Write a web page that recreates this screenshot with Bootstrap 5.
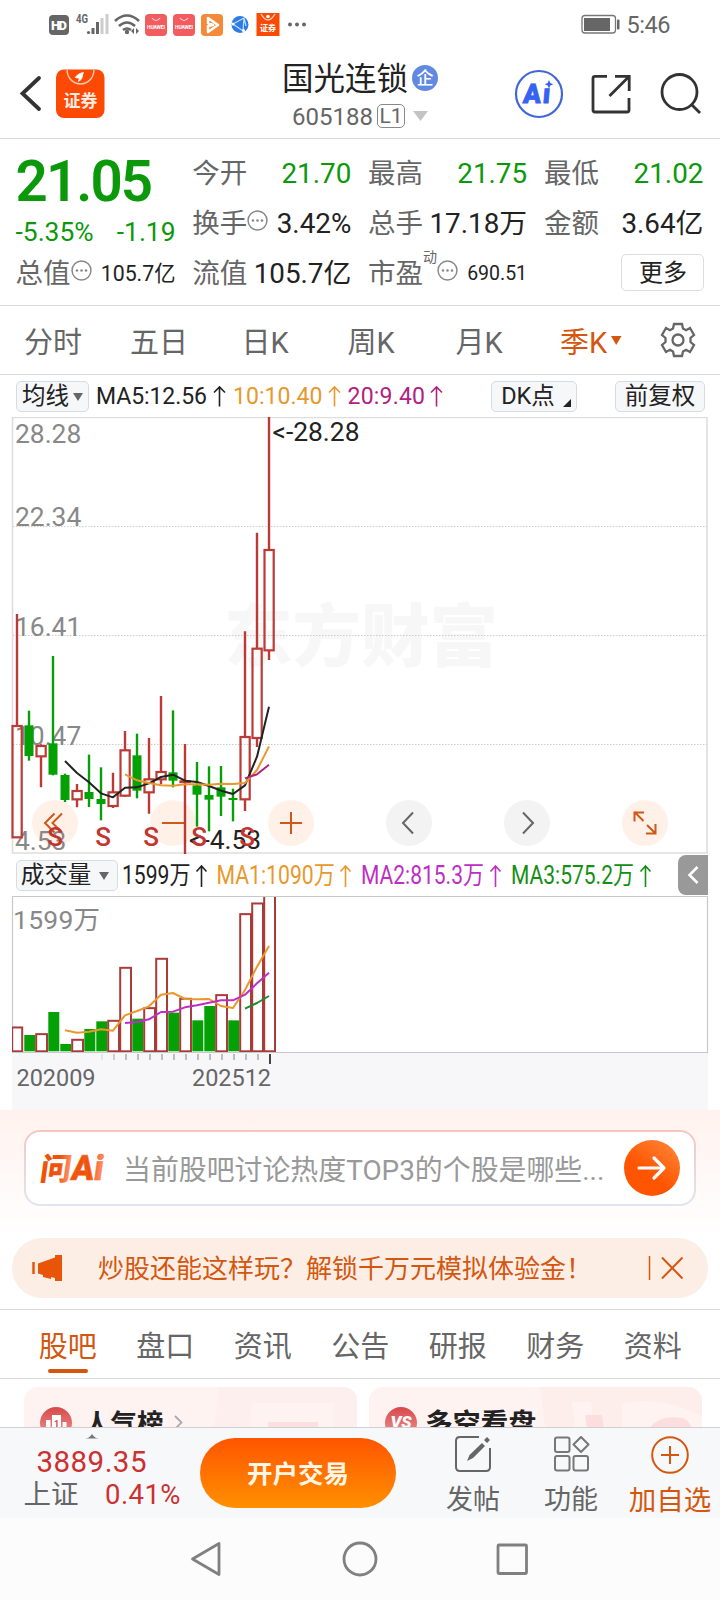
<!DOCTYPE html>
<html lang="zh-CN">
<head>
<meta charset="utf-8">
<meta name="viewport" content="width=device-width, initial-scale=1">
<title>国光连锁 605188</title>
<link href="https://cdn.jsdelivr.net/npm/bootstrap@5.3.0/dist/css/bootstrap.min.css" rel="stylesheet">
<style>
:root{--ink:#222;--dim:#666;--up:#c23531;--down:#0b990b;--accent:#d4570f;--rule:#d9d9d9}
body{font-family:Roboto,"Noto Sans CJK SC",sans-serif;color:var(--ink);background:#fff;line-height:1;width:720px;height:1600px;overflow:hidden}
svg{display:block;flex:none}
svg text{font-family:Roboto,"Noto Sans CJK SC",sans-serif}
.status-row{height:48px}
.title-row{height:91px;border-bottom:1px solid var(--rule)}
.side-zone{width:240px}
.stock-name{font-size:31.5px}
.stock-code{font-size:24px;color:var(--dim);padding-top:1px}
.level-tag{font-size:21px;border:1.5px solid #888;border-radius:5px;width:28px;height:24px;color:var(--dim)}
.ent-tag{width:26px;height:26px;background:#6189e0;font-size:17px;font-weight:500;color:#fff;margin-top:-3px}
.quote-panel{height:167px;border-bottom:1px solid var(--rule);display:grid;grid-template-columns:160px 159px 159px 159.5px;column-gap:16.8px;padding:10px 15.5px 0;grid-template-rows:50px 50px 50px}
.quote-panel>div{display:flex;justify-content:space-between;align-items:center;white-space:nowrap}
.lbl{font-size:27.5px;color:var(--dim);display:flex;align-items:center}
.val{font-size:27.8px}
.delta{font-size:26.4px}
.val-sm{font-size:21.3px}
.val-xs{font-size:19.5px}
.dyn{font-size:14px;top:-3px}
.tip-mark{margin-bottom:7px}
.big-price{font-size:56.5px;font-weight:600;letter-spacing:-1.9px}
.fall{color:var(--down)}
.more-btn{width:83px;height:37px;border:1.5px solid #ddd;border-radius:5px;font-size:24px;display:flex;align-items:center;justify-content:center;margin-top:-3px;margin-right:-1px}
.period-row{height:69px;border-bottom:1px solid var(--rule);font-size:29px;color:var(--dim)}
.period-row>span{width:106px;text-align:center;white-space:nowrap;padding-top:6px}
.hot{color:var(--accent)!important}
.ma-row{height:42px;font-size:22.9px;white-space:nowrap;padding:0 15px 0 16px}
.chip{height:31px;background:#f6f7f9;border:1px solid #d8dbe0;border-radius:5px;font-size:23.5px;display:flex;align-items:center;justify-content:center;padding-top:2px}
.vol-row{height:42px;padding-left:16px;padding-right:12px}
.fold-btn{width:30px;height:40px;background:#999;border-radius:8px 0 0 8px}
.ask-zone{height:128px;background:linear-gradient(#fff2ee,#fff);padding:20px 24px 0}
.ask-box{height:76px;border:2px solid transparent;border-radius:16px;background:linear-gradient(#fff,#fff) padding-box,linear-gradient(#f5c6bf,#dfe6f3) border-box;padding:0 14px 0 11px}
.ask-text{font-size:27.9px;color:#999;white-space:nowrap;padding-top:5px}
.ask-go{width:56px;height:56px;border-radius:50%;background:linear-gradient(35deg,#ff5400 40%,#ff8a3c)}
.promo{height:60px;margin:0 12px;border-radius:30px;background:#fdeee5;color:var(--accent);font-size:26px;white-space:nowrap}
.promo-text{padding-top:2px}
.info-tabs{height:70px;margin-top:11px;border-top:1px solid var(--rule);border-bottom:1px solid var(--rule);font-size:29px;color:var(--dim);padding:0 18.5px 0 19px}
.info-tabs>span{flex:1;text-align:center;position:relative;padding-top:23px}
.info-tabs .hot::after{content:"";position:absolute;left:28.5px;top:59px;width:40px;height:4px;border-radius:2px;background:var(--accent)}
.teasers{height:48px;padding:8px 18px 0 24px;gap:12px;overflow:hidden}
.teaser{width:333px;height:90px;border-radius:14px;overflow:hidden}
.dock{height:91px;background:#f7f8fa;border-top:1px solid #cfcfd4}
.open-btn{width:196px;height:70px;border-radius:35px;background:linear-gradient(#ff5500,#ff9000);color:#fff6e4;font-size:25.5px;font-weight:700;margin-top:10px;padding-top:3px}
.dock-item{font-size:27px;color:var(--dim);white-space:nowrap}
.dock-item div{padding-top:13px}
.post-item{margin-left:50px;width:54px}
.func-item{margin-left:44px;width:54px}
.add-item{margin-left:30px;width:84px;font-size:27.5px}
.sys-nav{height:82px;background:#fcfcfc}
</style>
</head>
<body>

<header class="status-row d-flex align-items-center justify-content-between">
  <svg width="320" height="48" viewBox="0 0 320 48">
    <rect x="49" y="15" width="20" height="20" rx="4" fill="#666"/>
    <text x="59" y="30" font-size="13" font-weight="900" fill="#fff" text-anchor="middle" textLength="16">HD</text>
    <text x="76" y="23" font-size="12" font-weight="700" fill="#666" textLength="12" lengthAdjust="spacingAndGlyphs">4G</text>
    <g fill="#666"><circle cx="88.5" cy="32.5" r="1.6"/><rect x="91.500" y="28" width="3" height="6"/><rect x="96" y="22" width="3" height="12"/></g>
    <g fill="#ccc"><rect x="100.500" y="18" width="3" height="16"/><rect x="105.500" y="14" width="3" height="20"/></g>
    <g fill="none" stroke="#666" stroke-width="2.600"><path d="M115 21Q127 10 139 21M119 26Q127 19 135 26M123 30Q127 27 131 30"/></g>
    <circle cx="127" cy="32" r="2.200" fill="#666"/><path d="M131 31l3-3v6zM139 31l-3-3v6z" fill="#666"/>
    <g id="hw"><rect x="145" y="14" width="22" height="22" rx="4" fill="#f25c5f"/><path d="M152 18q4 5 8 0" fill="none" stroke="#fdd" stroke-width="1.200"/><text x="156" y="28.500" fill="#fff" font-size="5" font-weight="700" text-anchor="middle" textLength="18">HUAWEI</text></g>
    <use href="#hw" x="28"/>
    <rect x="201" y="14" width="22" height="22" rx="4" fill="#f5893a"/><path d="M208 18l10 7-10 7v-6l5-1-5-2z" fill="none" stroke="#fff" stroke-width="2.500" stroke-linejoin="round"/>
    <circle cx="240" cy="24.500" r="8.500" fill="#2f7be6"/><path d="M233 24l11-6-1 13zM244 18l2 8" stroke="#bfe0ff" fill="none" stroke-width="1.200"/><circle cx="233" cy="24" r="1.500" fill="#fff"/><circle cx="243.500" cy="30.500" r="1.500" fill="#fff"/>
    <rect x="256.500" y="13" width="23" height="23" fill="#fa4b06"/><path d="M261 14q7 12 14 0" fill="none" stroke="#ffd8c4" stroke-width="1.200"/><circle cx="268" cy="16.500" r="1.800" fill="#fff"/><text x="268" y="31" font-size="8" font-weight="700" fill="#fff" text-anchor="middle">证券</text>
    <g fill="#666"><circle cx="290" cy="24.500" r="2"/><circle cx="297" cy="24.500" r="2"/><circle cx="304" cy="24.500" r="2"/></g>
  </svg>
  <svg width="140" height="48" viewBox="580 0 140 48">
    <rect x="582" y="15.500" width="33.500" height="17.500" rx="3" fill="#fff" stroke="#777" stroke-width="1.300"/><rect x="584" y="18" width="26" height="13" fill="#666"/><rect x="617" y="19.500" width="2.500" height="10" rx="1" fill="#666"/>
    <text x="626.500" y="33" font-size="23.500" fill="#666" textLength="44">5:46</text>
  </svg>
</header>

<nav class="title-row d-flex justify-content-between">
  <div class="side-zone">
    <svg width="120" height="90" viewBox="0 48 120 90">
      <path d="M39 78L22.500 93.500L39 109" fill="none" stroke="#333" stroke-width="3.800" stroke-linecap="round"/>
      <rect x="56" y="69.500" width="48.500" height="48.500" rx="8" fill="#fc4903"/>
      <path d="M67 70C68 88.500 93 88.500 94 70" fill="none" stroke="#ffc9b0" stroke-width="1.500"/>
      <path d="M75 77.500q4-5 8.500-5-1 5-5 8l4-5q0 4-4 6l1-3z" fill="#fff" stroke="#fff" stroke-width=".6"/>
      <text x="80.500" y="107" font-size="17" font-weight="700" fill="#ffece2" text-anchor="middle">证券</text>
    </svg>
  </div>
  <div class="text-center">
    <div class="d-flex align-items-center justify-content-center mt-3">
      <span class="stock-name">国光连锁</span>
      <span class="ent-tag rounded-circle ms-1 d-flex align-items-center justify-content-center">企</span>
    </div>
    <div class="d-flex align-items-center justify-content-center mt-1 pt-1">
      <span class="stock-code">605188</span>
      <span class="level-tag ms-1 d-flex align-items-center justify-content-center">L1</span>
      <svg class="ms-2" width="15" height="10"><path d="M0 0h15L7.500 10z" fill="#c4c4c4"/></svg>
    </div>
  </div>
  <div class="side-zone">
    <svg width="240" height="90" viewBox="480 48 240 90" fill="none">
      <circle cx="539" cy="94" r="23" stroke="#4166d8" stroke-width="2.200"/>
      <g transform="translate(524 102.500) skewX(5)"><text x="0" y="0" font-size="27" font-weight="900" font-style="italic" fill="#3563f0" textLength="27" stroke="#3563f0" stroke-width=".8">Aı</text></g>
      <path d="M549 80l1.300 3 3 1.300-3 1.300-1.300 3-1.300-3-3-1.300 3-1.300z" fill="#3563f0"/>
      <g stroke="#333" stroke-width="2.800"><path d="M607 76.300H595q-2 0-2 2V110q0 2 2 2h32q2 0 2-2V98M609.500 96L629 76.500M615 76.300h14.200V91"/>
      <circle cx="679.500" cy="92" r="17.500"/><path d="M691.500 104.500L700 113"/></g>
    </svg>
  </div>
</nav>

<svg width="0" height="0" class="position-absolute"><defs>
  <symbol id="tip" viewBox="0 0 20 20"><circle cx="10" cy="10" r="9" fill="none" stroke="#888" stroke-width="1.400"/><g fill="#888"><circle cx="5.700" cy="10" r="1.200"/><circle cx="10" cy="10" r="1.200"/><circle cx="14.300" cy="10" r="1.200"/></g></symbol>
</defs></svg>

<section class="quote-panel">
  <div><span class="big-price fall mt-3">21.05</span></div>
  <div><span class="lbl">今开</span><span class="val fall">21.70</span></div>
  <div><span class="lbl">最高</span><span class="val fall">21.75</span></div>
  <div><span class="lbl">最低</span><span class="val fall">21.02</span></div>
  <div class="fall pt-3"><span class="delta">-5.35%</span><span class="delta">-1.19</span></div>
  <div><span class="lbl">换手<svg width="21" height="21" class="tip-mark"><use href="#tip"/></svg></span><span class="val">3.42%</span></div>
  <div><span class="lbl">总手</span><span class="val">17.18万</span></div>
  <div><span class="lbl">金额</span><span class="val">3.64亿</span></div>
  <div><span class="lbl">总值<svg width="21" height="21" class="tip-mark"><use href="#tip"/></svg></span><span class="val-sm">105.7亿</span></div>
  <div><span class="lbl">流值</span><span class="val">105.7亿</span></div>
  <div><span class="lbl">市盈<sup class="dyn align-self-start">动</sup><svg width="21" height="21" class="tip-mark"><use href="#tip"/></svg></span><span class="val-xs">690.51</span></div>
  <div><span class="more-btn ms-auto">更多</span></div>
</section>

<nav class="period-row d-flex align-items-center">
  <span>分时</span><span>五日</span><span>日K</span><span>周K</span><span class="ps-1">月K</span>
  <span class="hot d-flex align-items-center justify-content-center ps-3">季K<svg class="ms-1 mb-1" width="11" height="10"><path d="M0 0h10.500L5.200 9z" fill="#d4570f"/></svg></span>
  <svg class="ms-4" width="36" height="36" viewBox="-18 -18 36 36" fill="none" stroke="#666" stroke-width="2.300"><path d="M-4-16H4L5-11.500 8-9.800 12-12 16-5 12.500-2V2L16 5 12 12 8 9.800 5 11.500 4 16H-4L-5 11.500-8 9.800-12 12-16 5-12.500 2V-2L-16-5-12-12-8-9.800-5-11.500z"/><circle r="5.500"/></svg>
</nav>

<section>
  <div class="ma-row d-flex align-items-center">
    <span class="chip" style="width:73px">均线<svg class="ms-1" width="10" height="9"><path d="M0 0h10L5 8z" fill="#666"/></svg></span>
    <svg width="365" height="40" viewBox="89 376 365 40" font-size="23">
      <text x="96" y="404" fill="#222" textLength="111">MA5:12.56</text>
      <text x="233" y="404" fill="#e8982c" textLength="89.500">10:10.40</text>
      <text x="347.500" y="404" fill="#b3217f" textLength="77.500">20:9.40</text>
      <g fill="none" stroke-width="1.600"><path d="M219.500 406.500V387M214 392.500l5.500-5.500 5.500 5.500" stroke="#222"/><path d="M334.500 406.500V387M329 392.500l5.500-5.500 5.500 5.500" stroke="#e8982c"/><path d="M436.500 406.500V387M431 392.500l5.500-5.500 5.500 5.500" stroke="#b3217f"/></g>
    </svg>
    <span class="chip ms-auto ps-1" style="width:86px">DK点<svg class="ms-2 align-self-end mb-1" width="8" height="8"><path d="M8 0v8H0z" fill="#222"/></svg></span>
    <span class="chip" style="width:90px;margin-left:38px">前复权</span>
  </div>

  <svg id="kline" width="720" height="437" viewBox="0 417 720 437">
    <text x="224" y="661" font-size="68" font-weight="900" fill="#f7f7f7" textLength="274" lengthAdjust="spacingAndGlyphs">东方财富</text>
    <path d="M12.500 417.500H707V853H12.500z" fill="none" stroke="#dedede" stroke-width="1.600"/>
    <path d="M13 526.500H707M13 635.500H707M13 744.500H707" stroke="#ccc" stroke-width="1" stroke-dasharray="1.500 1.500"/>
    <g fill="#fff0e8"><circle cx="55" cy="823" r="23"/><circle cx="173" cy="823" r="23"/><circle cx="291" cy="823" r="23"/><circle cx="645" cy="823" r="23"/></g>
    <g fill="#f3f3f3"><circle cx="409" cy="823" r="23"/><circle cx="527" cy="823" r="23"/></g>
    <g fill="none" stroke="#cf5818" stroke-width="2"><path d="M54.500 813.500L45 823L54.500 832.500M62 813.500L52.500 823L62 832.500M162 823h22M280 823h22M291 812v22"/><path d="M643.500 821L634.500 812M634.500 821.500v-9h9.500M647 825l9 9M655.500 824v9.500H646"/></g>
    <g fill="none" stroke="#666" stroke-width="2"><path d="M413 812.500L403 823l10 10.500M523 812.500L533 823l-10 10.500"/></g>
    <g font-size="26.400" fill="#888"><text x="15" y="443">28.28</text><text x="15" y="526">22.34</text><text x="15" y="636">16.41</text><text x="15" y="744.500">10.47</text><text x="15" y="849.500">4.53</text></g>
    <g id="candles"></g>
    <g id="klines" fill="none" stroke-width="2" stroke-linejoin="round"></g>
    <g font-size="26.400" fill="#222"><text x="272.500" y="440.500">&lt;-28.28</text><text x="189" y="849">&lt;-4.53</text></g>
    <g font-size="26" font-weight="500" fill="#c23531" text-anchor="middle"><text x="55" y="846">S</text><text x="103" y="846">S</text><text x="151" y="846">S</text><text x="199" y="846">S</text><text x="247" y="846">S</text></g>
  </svg>

  <div class="vol-row d-flex align-items-center">
    <span class="chip pe-1" style="width:102px">成交量<svg class="ms-2" width="10" height="9"><path d="M0 0h10L5 8z" fill="#666"/></svg></span>
    <svg width="550" height="42" viewBox="118 854 550 42" font-size="25">
      <text x="122" y="884.300" fill="#222" textLength="68.500" lengthAdjust="spacingAndGlyphs">1599万</text>
      <text x="216.500" y="884.300" fill="#e8982c" textLength="118.500" lengthAdjust="spacingAndGlyphs">MA1:1090万</text>
      <text x="361" y="884.300" fill="#bd2fc4" textLength="123" lengthAdjust="spacingAndGlyphs">MA2:815.3万</text>
      <text x="511" y="884.300" fill="#148f14" textLength="123" lengthAdjust="spacingAndGlyphs">MA3:575.2万</text>
      <g fill="none" stroke-width="1.600"><path d="M201.500 887V866M196.500 871.500l5-5.500 5 5.500" stroke="#222"/><path d="M345.500 887V866M340.500 871.500l5-5.500 5 5.500" stroke="#e8982c"/><path d="M495.500 887V866M490.500 871.500l5-5.500 5 5.500" stroke="#bd2fc4"/><path d="M645.500 887V866M640.500 871.500l5-5.500 5 5.500" stroke="#148f14"/></g>
    </svg>
    <span class="fold-btn ms-auto d-flex align-items-center justify-content-center"><svg width="12" height="18"><path d="M10.500 1L2.500 9l8 8" fill="none" stroke="#fff" stroke-width="2.600"/></svg></span>
  </div>

  <svg width="720" height="214" viewBox="0 896 720 214">
    <rect x="12" y="1053" width="696" height="57" fill="#f7f7fa"/>
    <path d="M12.500 896.500H707.500V1052.500H12.500z" fill="#fff" stroke="#c8c8c8" stroke-width="1.200"/>
    <text x="13" y="929" font-size="26.500" fill="#888" textLength="87">1599万</text>
    <g id="volumes"></g>
    <g id="vlines" fill="none" stroke-width="2" stroke-linejoin="round"></g>
    <g id="ticks" stroke="#aaa" stroke-width="1.500"></g>
    <path d="M270 1054v10" stroke="#444" stroke-width="2"/>
    <g font-size="23.500" fill="#666"><text x="16.500" y="1086" textLength="79">202009</text><text x="192" y="1086" textLength="79">202512</text></g>
  </svg>
</section>

<section class="ask-zone">
  <div class="ask-box d-flex align-items-center">
    <svg width="70" height="40" viewBox="37 1147 70 40">
      <defs><linearGradient id="ai" x1="0" x2="1"><stop offset="0" stop-color="#f0520b"/><stop offset=".6" stop-color="#f0520b"/><stop offset="1" stop-color="#ff9a78"/></linearGradient></defs>
      <g transform="translate(39 1178.500) skewX(-8)" font-weight="900" fill="url(#ai)"><text x="0" y="0" font-size="31" textLength="31" lengthAdjust="spacingAndGlyphs">问</text><text x="31" y="0" font-size="35" textLength="32" stroke="#f26a2c" stroke-width=".5" lengthAdjust="spacingAndGlyphs">Ai</text></g>
    </svg>
    <span class="ask-text ms-3">当前股吧讨论热度TOP3的个股是哪些...</span>
    <span class="ask-go ms-auto d-flex align-items-center justify-content-center"><svg width="30" height="26" fill="none" stroke="#fff" stroke-width="3.200" stroke-linecap="round" stroke-linejoin="round"><path d="M2 13h25M17 3l10 10-10 10"/></svg></span>
  </div>
</section>

<section class="promo d-flex align-items-center">
  <svg width="86" height="40" viewBox="12 1248 86 40"><path d="M33.500 1262v12" stroke="#e85408" stroke-width="2.500"/><path d="M38 1263.500l17-6v-2.500h7v26h-7v-3l-4-1v2l-8-2v-2l-5-1.500z" fill="#e85408"/></svg>
  <span class="promo-text">炒股还能这样玩？解锁千万元模拟体验金！</span>
  <svg class="ms-auto me-4" width="36" height="26" viewBox="648 1255 36 26" fill="none" stroke="#d4570f"><path d="M649.500 1256v24" stroke-width="1.500"/><path d="M662 1257.500l20.500 21M682.500 1257.500l-20.500 21" stroke-width="2"/></svg>
</section>

<nav class="info-tabs d-flex">
  <span class="hot">股吧</span><span>盘口</span><span>资讯</span><span>公告</span><span>研报</span><span>财务</span><span>资料</span>
</nav>

<section class="teasers d-flex">
  <svg class="teaser" viewBox="24 1387 333 90">
    <defs><linearGradient id="rd" x2="0" y2="1"><stop stop-color="#d8484a"/><stop offset="1" stop-color="#ee9a94"/></linearGradient></defs>
    <rect x="24" y="1387" width="333" height="90" fill="#fef3f1"/><path d="M219 1387H357V1477H209z" fill="#fdefed"/><path d="M252 1403H334V1477H245z" fill="#fff3f1"/><rect x="268" y="1422" width="50" height="30" fill="#fce0df"/>
    <circle cx="56" cy="1423" r="16" fill="url(#rd)"/><path d="M46 1420h4.500v20H46zM52 1415h9v25h-9zM62.500 1422h4v18h-4z" fill="#fff"/><text x="56.500" y="1427" font-size="9" font-weight="700" fill="#d8484a" text-anchor="middle">1</text>
    <text x="84" y="1432.500" font-size="26.500" font-weight="700" fill="#222">人气榜</text>
    <path d="M175 1416l6.500 6.500-6.500 6.500" fill="none" stroke="#aaa" stroke-width="1.800"/>
  </svg>
  <svg class="teaser" viewBox="369 1387 333 90">
    <rect x="369" y="1387" width="333" height="90" fill="#fef3f1"/><path d="M540 1387H702V1477H552z" fill="#fdedeb"/>
    <path d="M572 1402h19l10 75h-20z" fill="#fff3f1"/><path d="M585 1415h17l4 30h-17z" fill="#fbdedd"/><path d="M622 1477V1404q35-10 80 12v61z" fill="#fff3f1"/><path d="M648 1430q10-16 35-12 8 4 10 14z" fill="#fbdedd"/>
    <circle cx="401" cy="1423" r="16" fill="url(#rd)"/><text x="401" y="1427.500" font-size="17" font-weight="900" font-style="italic" fill="#fff" text-anchor="middle">VS</text>
    <text x="425" y="1433" font-size="27.800" font-weight="700" fill="#222">多空看盘</text>
  </svg>
</section>

<footer>
  <div class="dock d-flex">
    <svg width="200" height="90" viewBox="0 1428 200 90"><path d="M85 1438.500q4 0 7-4.500 3 4.500 7 4.500z" fill="#777"/>
      <text x="36.500" y="1472" font-size="29.500" fill="#cc3030" textLength="110">3889.35</text>
      <text x="23.500" y="1504" font-size="27.500" fill="#666">上证</text><text x="105" y="1504" font-size="27.500" fill="#cc3030" textLength="75.500">0.41%</text></svg>
    <span class="open-btn d-flex align-items-center justify-content-center">开户交易</span>
    <div class="dock-item post-item">
      <svg class="mx-auto mt-2" width="38" height="38" viewBox="-19 -18 38 38" fill="none" stroke="#666" stroke-width="2"><path d="M6-17H-13q-4 0-4 4V13q0 4 4 4H13q4 0 4-4V-6"/><path d="M-6 7L-3.500 1 9-11l3 3L-0 4z M11-14l3-3 3 3-3 3z" fill="#666" stroke="none"/></svg>
      <div class="text-center">发帖</div></div>
    <div class="dock-item func-item">
      <svg class="mx-auto mt-2" width="38" height="38" viewBox="-19 -18 38 38" fill="none" stroke="#777" stroke-width="2"><rect x="-16" y="-16.500" width="14.500" height="14.500" rx="2"/><rect x="-16" y="2" width="14.500" height="14.500" rx="2"/><rect x="2.500" y="2" width="14.500" height="14.500" rx="2"/><path d="M10-17l7.500 7.500-7.500 7.500-7.500-7.500z" stroke-linejoin="round"/></svg>
      <div class="text-center">功能</div></div>
    <div class="dock-item add-item hot">
      <svg class="mx-auto mt-2" width="40" height="38" viewBox="-20 -19 40 38" fill="none" stroke="#d4570f" stroke-width="2"><circle r="17.800"/><path d="M-9 0H9M0-9V9"/></svg>
      <div class="text-center">加自选</div></div>
  </div>
  <div class="sys-nav">
    <svg width="720" height="82" viewBox="0 1518 720 82" fill="none" stroke="#808080" stroke-width="2.800" stroke-linejoin="round"><path d="M192.500 1559L219 1543.500V1574.500z"/><circle cx="360" cy="1559" r="16"/><rect x="498" y="1545" width="28.500" height="28.500" rx="1"/></svg>
  </div>
</footer>

<script src="https://cdn.jsdelivr.net/npm/bootstrap@5.3.0/dist/js/bootstrap.bundle.min.js"></script>
<script>
// One entry per quarter: direction, high, body top, body bottom, low (chart units, three per pixel)
const bars = [
 ['r',42,378,712,712],['g',332,376,468,482],['r',433,438,469,562],['g',168,430,524,526],['g',521,525,600,606],
 ['r',552,573,598,622],['g',464,576,597,621],['g',502,597,612,661],['r',518,577,618,624],['r',393,451,587,590],
 ['g',401,466,572,595],['r',414,538,577,641],['r',288,516,538,553],['g',331,517,542,562],['r',432,544,546,762],
 ['g',486,556,584,680],['g',499,585,599,694],['g',498,562,590,648],['g',566,594,600,664],['r',94,411,598,633],
 ['r',-202,146,414,441],['r',-550,-150,151,180]];
const vols = [530,555,550,486,582,567,537,514,510,351,506,472,324,488,444,511,468,433,511,190,158,130];
const risingVolume = i => bars[i][0] === 'r' || i === 17;
const red = '#bb3a36', green = '#05a005', volRed = '#a93c3a';
const X = i => 17 + 12 * i;
let out = '';
bars.forEach(([c, h, t, b, l], i) => {
  const y = v => 600 + v / 3, col = c === 'r' ? red : green, x = X(i);
  if (c === 'r') {
    out += b - t < 4 ? `<path d="M${x} ${y(h)}V${y(l)}" stroke="${col}" stroke-width="2.4"/>` : `<path d="M${x} ${y(h)}V${y(t)}M${x} ${y(b)}V${y(l)}" stroke="${col}" stroke-width="2.4"/>`;
    out += `<rect x="${x - 4.500}" y="${y(t)}" width="9.200" height="${(b - t) / 3}" fill="none" stroke="${col}" stroke-width="2.2"/>`;
  } else {
    out += `<path d="M${x} ${y(h)}V${y(l)}" stroke="${col}" stroke-width="2.4"/><rect x="${x - 4.500}" y="${y(t)}" width="9" height="${(b - t) / 3}" fill="${col}"/>`;
  }
});
document.getElementById('candles').innerHTML = out;
out = '';
vols.forEach((v, i) => {
  const top = Math.max(850 + v / 3, 890), x = X(i) + .5;
  if (risingVolume(i)) out += `<rect x="${Math.max(x - 5.300, 12)}" y="${top + .8}" width="${i ? 10.800 : 10}" height="${1050.500 - top}" fill="#fff" stroke="${volRed}" stroke-width="2"/>`;
  else out += `<rect x="${x - 5.200}" y="${top}" width="11" height="${1051.300 - top}" fill="${green}"/>`;
});
document.getElementById('volumes').innerHTML = `<clipPath id="vc"><rect x="12" y="897" width="696" height="155"/></clipPath><g clip-path="url(#vc)">${out}</g>`;
const line = (start, ys, base, col) => `<polyline stroke="${col}" points="${ys.map((v, i) => X(start + i) + ',' + (base + v / 3)).join(' ')}"/>`;
document.getElementById('klines').innerHTML =
  line(4, [483,519,547,580,592,563,562,550,531,524,542,546,558,572,582,556,470,320], 600, '#222') +
  line(9, [523,541,549,556,557,553,553,554,551,552,549,510,439], 600, '#e8982c') +
  line(19, [535,523,494], 600, '#b3217f');
document.getElementById('vlines').innerHTML =
  line(4, [541,548,545,538,542,496,483,469,434,429,447,448,447,468,474,420,350,288], 850, '#e8982c') +
  line(9, [519,516,508,486,485,472,466,458,451,451,434,400,368], 850, '#bd2fc4') +
  line(19, [476,459,438], 850, '#1f8a2a');
let t = '';
for (let i = 0; i < 14; i++) t += `<path d="M${102 + 12 * i} 1054v6" opacity="${i === 0 ? .3 : i === 1 ? .7 : 1}"/>`;
document.getElementById('ticks').innerHTML = t;
</script>
</body>
</html>
